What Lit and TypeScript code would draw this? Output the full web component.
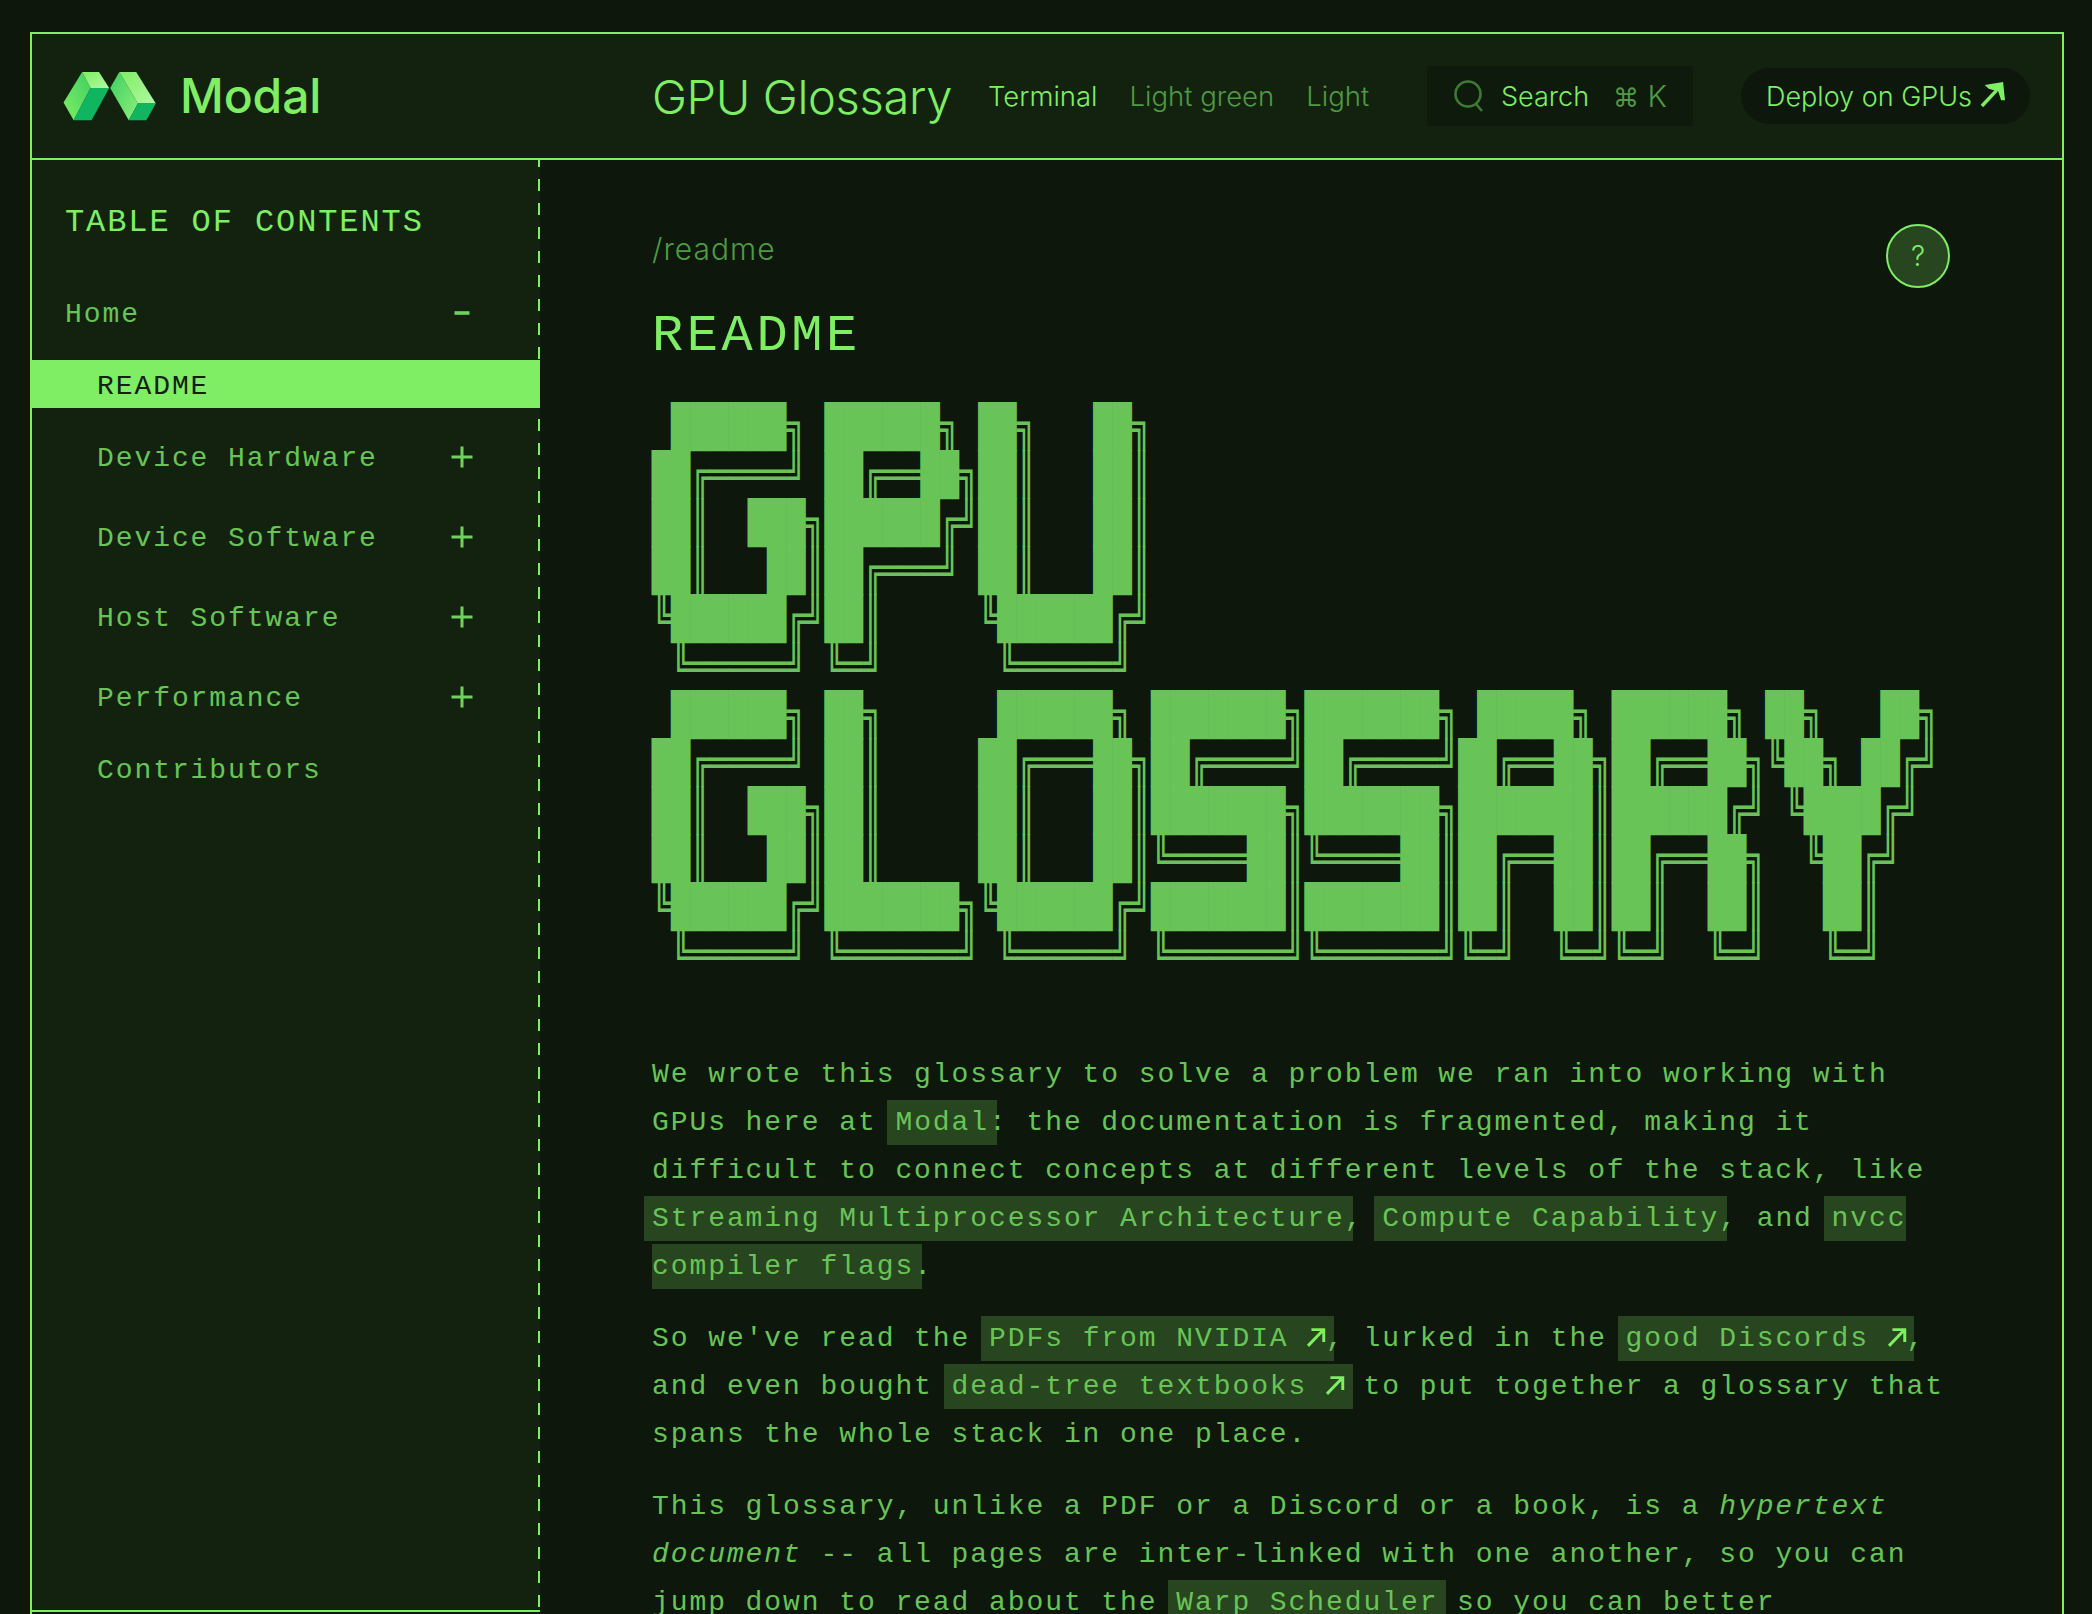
import { LitElement, html, css, svg } from "lit";
import { customElement } from "lit/decorators.js";

const ART = ` ██████╗ ██████╗ ██╗   ██╗
██╔════╝ ██╔══██╗██║   ██║
██║  ███╗██████╔╝██║   ██║
██║   ██║██╔═══╝ ██║   ██║
╚██████╔╝██║     ╚██████╔╝
 ╚═════╝ ╚═╝      ╚═════╝ 
 ██████╗ ██╗      ██████╗ ███████╗███████╗ █████╗ ██████╗ ██╗   ██╗
██╔════╝ ██║     ██╔═══██╗██╔════╝██╔════╝██╔══██╗██╔══██╗╚██╗ ██╔╝
██║  ███╗██║     ██║   ██║███████╗███████╗███████║██████╔╝ ╚████╔╝ 
██║   ██║██║     ██║   ██║╚════██║╚════██║██╔══██║██╔══██╗  ╚██╔╝  
╚██████╔╝███████╗╚██████╔╝███████║███████║██║  ██║██║  ██║   ██║   
 ╚═════╝ ╚══════╝ ╚═════╝ ╚══════╝╚══════╝╚═╝  ╚═╝╚═╝  ╚═╝   ╚═╝   `;

const ext = html`<svg class="ext" viewBox="0 0 19 20" aria-hidden="true"><path d="M1 19 L16 3.5 M4.5 2.5 H17 V15" fill="none" stroke="#7fee64" stroke-width="3"/></svg>`;

const plus = html`<svg class="tog" viewBox="0 0 22 22" aria-hidden="true"><path d="M0.5 11 H21.5 M11 0.5 V21.5" stroke="#6fd25b" stroke-width="3" fill="none"/></svg>`;
const minus = html`<svg class="tog" viewBox="0 0 22 22" aria-hidden="true"><path d="M3.5 11 H18.5" stroke="#6fd25b" stroke-width="3.6" fill="none"/></svg>`;

const logo = svg`
  <defs>
    <linearGradient id="lg1" x1="0" y1="1" x2="1" y2="0"><stop offset="0" stop-color="#7fee64"/><stop offset="1" stop-color="#3fcf62"/></linearGradient>
    <linearGradient id="lg2" x1="0" y1="0" x2="1" y2="1"><stop offset="0" stop-color="#3fcf62"/><stop offset="1" stop-color="#8bf07a"/></linearGradient>
    <linearGradient id="lg3" x1="0" y1="0" x2="1" y2="1"><stop offset="0" stop-color="#7fee64"/><stop offset="1" stop-color="#b0f8a0"/></linearGradient>
  </defs>
  <polygon points="80,25 105,72 55,168 25,115" fill="url(#lg1)"/>
  <polygon points="80,25 130,25 160,72 105,72" fill="url(#lg3)"/>
  <polygon points="105,72 160,72 108,168 55,168" fill="#0fb55f"/>
  <polygon points="190,25 245,118 218,168 163,72" fill="url(#lg2)"/>
  <polygon points="190,25 240,25 298,118 245,118" fill="url(#lg3)"/>
  <polygon points="245,118 298,118 270,168 218,168" fill="#0fb55f"/>`;

@customElement("app-root")
export class AppRoot extends LitElement {
  static styles = css`
    :host {
      display: block;
      height: 100vh;
      overflow: hidden;
      background: #0d170b;
      box-sizing: border-box;
      padding: 32px 28px 0 30px;
      color: #7fee64;
      font-family: "Inter", "Liberation Sans", sans-serif;
    }
    .frame {
      height: 100%;
      box-sizing: border-box;
      border: 2px solid #7fee64;
      border-bottom: 0;
      display: flex;
      flex-direction: column;
      overflow: hidden;
    }
    header {
      flex: none;
      height: 124px;
      border-bottom: 2px solid #7fee64;
      background: #12220f;
      display: flex;
      align-items: center;
      padding: 0 32px 0 31px;
      font-size: 27px;
      font-weight: 300;
    }
    .brand {
      width: 589px;
      flex: none;
      display: flex;
      align-items: center;
      gap: 23px;
      font-size: 48px;
      font-weight: 500;
      letter-spacing: -0.1px;
      margin-top: -2px;
    }
    .brand svg { width: 94px; height: 49px; display: block; margin-top: 2px; }
    .title { font-size: 47px; font-weight: 300; margin-right: 36px; letter-spacing: -0.35px; white-space: nowrap; }
    .themes { display: flex; gap: 32px; font-size: 27.5px; }
    .themes span { color: #4f9a42; white-space: nowrap; }
    .themes .on { color: #7fee64; }
    .search {
      margin-left: auto;
      width: 266px;
      height: 60px;
      box-sizing: border-box;
      background: #0e1a0c;
      display: flex;
      align-items: center;
      padding-left: 26px;
      white-space: nowrap;
    }
    .search svg { width: 32px; height: 32px; flex: none; margin-right: 16px; }
    .search .kbd { margin-left: 24px; color: #4f9a42; font-size: 30px; }
    .kbd b { font-family: "DejaVu Sans", sans-serif; font-weight: 400; font-size: 26px; }
    .deploy {
      margin-left: 48px;
      height: 56px;
      width: 289px;
      box-sizing: border-box;
      padding-left: 25px;
      border-radius: 28px;
      background: #0d170b;
      display: flex;
      align-items: center;
      gap: 8px;
      white-space: nowrap;
    }
    .deploy svg { width: 25px; height: 25px; flex: none; margin-top: -4px; }
    .body { flex: 1; min-height: 0; display: flex; }
    aside {
      flex: none;
      width: 508px;
      height: 1452px;
      box-sizing: border-box;
      background: linear-gradient(#7fee64 50%, transparent 50%) right 0 top 19px / 2px 24px repeat-y, #12220f;
      border-bottom: 2px solid #7fee64;
      padding-top: 37px;
      font-family: "Liberation Mono", monospace;
      font-size: 28px;
      letter-spacing: 1.92px;
      color: #69c457;
    }
    .toc {
      font-size: 32px;
      letter-spacing: 1.9px;
      line-height: 48px;
      color: #7fee64;
      padding: 2px 0 0 33px;
      margin-bottom: 41px;
    }
    .row {
      height: 48px;
      line-height: 48px;
      display: flex;
      align-items: center;
      justify-content: space-between;
      padding: 0 67px 0 65px;
      margin-bottom: 24px;
      white-space: nowrap;
    }
    .row span { padding-top: 5px; }
    .row .tog { margin-top: 2px; }
    .row.top { padding-left: 33px; }
    .row.spaced { margin-bottom: 32px; }
    .row.cur {
      background: #7fee64;
      color: #12220f;
    }
    .tog { width: 22px; height: 22px; flex: none; }
    main {
      flex: 1;
      min-width: 0;
      box-sizing: border-box;
      padding: 64px 112px 0 112px;
      overflow: hidden;
    }
    .crumbs { display: flex; justify-content: space-between; align-items: flex-start; }
    .path { margin-top: 7px; line-height: 36px; font-size: 30px; letter-spacing: 1px; font-weight: 300; color: #4f9a42; }
    .help {
      width: 64px;
      height: 64px;
      box-sizing: border-box;
      border: 2px solid #7fee64;
      border-radius: 50%;
      background: #27451f;
      display: flex;
      align-items: center;
      justify-content: center;
      font-size: 28px;
      font-weight: 300;
    }
    h1 {
      margin: 13px 0 30px;
      font-family: "Liberation Mono", monospace;
      font-weight: 400;
      font-size: 52px;
      letter-spacing: 3.6px;
      line-height: 72px;
      color: #7fee64;
    }
    .art { height: 576px; margin-bottom: 72px; }
    pre {
      margin: 0;
      font-family: "DejaVu Sans Mono", monospace;
      font-size: 41.4px;
      letter-spacing: 0.08px;
      line-height: 48px;
      color: #69c457;
      transform: scaleX(0.768);
      transform-origin: 0 0;
    }
    p {
      margin: 0 0 24px;
      font-family: "Liberation Mono", monospace;
      font-size: 28px;
      letter-spacing: 1.92px;
      line-height: 48px;
      color: #69c457;
    }
    a {
      color: inherit;
      text-decoration: none;
      background: #27451f;
      padding: 7px 8px;
      margin: 0 -8px;
    }
    em { font-style: italic; }
    .ext { width: 18.72px; height: 20px; vertical-align: -1px; overflow: visible; }
  `;

  render() {
    return html`
      <div class="frame">
        <header>
          <div class="brand">
            <svg viewBox="25 25 275 145" aria-hidden="true">${logo}</svg>
            <span>Modal</span>
          </div>
          <div class="title">GPU Glossary</div>
          <div class="themes">
            <span class="on">Terminal</span><span>Light green</span><span>Light</span>
          </div>
          <div class="search">
            <svg viewBox="0 0 32 32" aria-hidden="true"><circle cx="15" cy="14" r="12.5" fill="none" stroke="#3f7a35" stroke-width="2.6"/><path d="M23 24 L29 31" stroke="#3f7a35" stroke-width="2.6"/></svg>
            <span>Search</span>
            <span class="kbd"><b>⌘</b> K</span>
          </div>
          <div class="deploy">
            <span>Deploy on GPUs</span>
            <svg viewBox="0 0 26 26" aria-hidden="true"><path d="M2 25 L17 9" stroke="#7fee64" stroke-width="3.6" fill="none"/><polygon points="5,3 24,0 26,19 22,19 19,10 9,7" fill="#7fee64"/></svg>
          </div>
        </header>
        <div class="body">
          <aside>
            <div class="toc">TABLE OF CONTENTS</div>
            <div class="row top"><span>Home</span>${minus}</div>
            <div class="row cur"><span>README</span></div>
            <div class="row spaced"><span>Device Hardware</span>${plus}</div>
            <div class="row spaced"><span>Device Software</span>${plus}</div>
            <div class="row spaced"><span>Host Software</span>${plus}</div>
            <div class="row"><span>Performance</span>${plus}</div>
            <div class="row"><span>Contributors</span></div>
          </aside>
          <main>
            <div class="crumbs">
              <div class="path">/readme</div>
              <div class="help">?</div>
            </div>
            <h1>README</h1>
            <div class="art"><pre>${ART}</pre></div>
            <p>We wrote this glossary to solve a problem we ran into working with GPUs here at <a href="#">Modal</a>: the documentation is fragmented, making it difficult to connect concepts at different levels of the stack, like <a href="#">Streaming Multiprocessor Architecture</a>, <a href="#">Compute Capability</a>, and <a href="#">nvcc compiler flags</a>.</p>
            <p>So we've read the <a href="#">PDFs from NVIDIA ${ext}</a>, lurked in the <a href="#">good Discords ${ext}</a>, and even bought <a href="#">dead-tree textbooks ${ext}</a> to put together a glossary that spans the whole stack in one place.</p>
            <p>This glossary, unlike a PDF or a Discord or a book, is a <em>hypertext document</em> -- all pages are inter-linked with one another, so you can jump down to read about the <a href="#">Warp Scheduler</a> so you can better understand the threads that you came across in the PyTorch documentation.</p>
          </main>
        </div>
      </div>
    `;
  }
}
